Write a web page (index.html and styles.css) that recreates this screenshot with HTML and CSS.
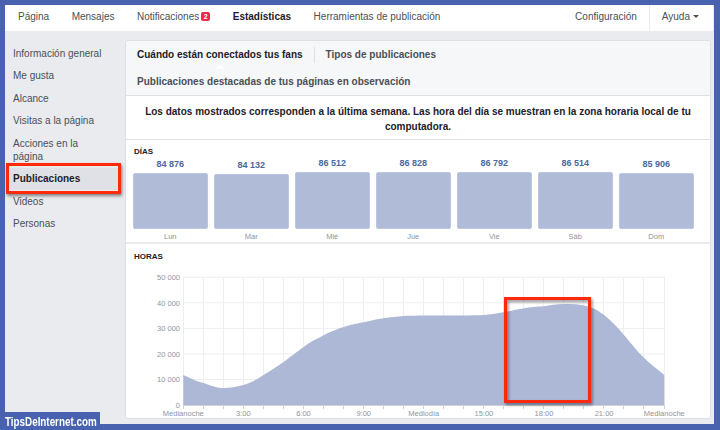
FILE: index.html
```html
<!DOCTYPE html>
<html lang="es">
<head>
<meta charset="utf-8">
<title>Estadísticas - Publicaciones</title>
<link rel="stylesheet" href="styles.css">
</head>
<body>
<div class="frame">
  <nav class="topnav">
    <span class="nav-item">Página</span>
    <span class="nav-item">Mensajes</span>
    <span class="nav-item">Notificaciones<span class="badge">2</span></span>
    <span class="nav-item nav-active">Estadísticas</span>
    <span class="nav-item">Herramientas de publicación</span>
    <div class="nav-right">
      <span class="nav-item">Configuración</span>
      <span class="nav-sep"></span>
      <span class="nav-item">Ayuda<span class="caret"></span></span>
    </div>
  </nav>
  <div class="layout">
    <aside class="sidebar">
      <div class="side-item">Información general</div>
      <div class="side-item">Me gusta</div>
      <div class="side-item">Alcance</div>
      <div class="side-item">Visitas a la página</div>
      <div class="side-item">Acciones en la página</div>
      <div class="side-item side-active">Publicaciones</div>
      <div class="side-item">Videos</div>
      <div class="side-item">Personas</div>
      <div class="highlight-box"></div>
    </aside>
    <main class="panel">
      <div class="tabs">
        <div class="tab-row">
          <span class="tab tab-current">Cuándo están conectados tus fans</span>
          <span class="tab-sep"></span>
          <span class="tab">Tipos de publicaciones</span>
        </div>
        <div class="tab-row">
          <span class="tab">Publicaciones destacadas de tus páginas en observación</span>
        </div>
      </div>
      <p class="desc">Los datos mostrados corresponden a la última semana. Las hora del día se muestran en la zona horaria local de tu computadora.</p>
      <section class="dias">
        <h3 class="sec-title">DÍAS</h3>
        <div class="bars">
          <div class="col"><span class="num">84 876</span><div class="bar" style="height:55.9px"></div><span class="day">Lun</span></div>
          <div class="col"><span class="num">84 132</span><div class="bar" style="height:55.1px"></div><span class="day">Mar</span></div>
          <div class="col"><span class="num">86 512</span><div class="bar" style="height:57px"></div><span class="day">Mié</span></div>
          <div class="col"><span class="num">86 828</span><div class="bar" style="height:57.2px"></div><span class="day">Jue</span></div>
          <div class="col"><span class="num">86 792</span><div class="bar" style="height:57.2px"></div><span class="day">Vie</span></div>
          <div class="col"><span class="num">86 514</span><div class="bar" style="height:57px"></div><span class="day">Sáb</span></div>
          <div class="col"><span class="num">85 906</span><div class="bar" style="height:56.4px"></div><span class="day">Dom</span></div>
        </div>
      </section>
      <section class="horas">
        <h3 class="sec-title">HORAS</h3>
        <svg class="chart" width="585" height="155" viewBox="0 0 585 155">
          <defs>
            <filter id="sh" x="-20%" y="-20%" width="140%" height="140%">
              <feDropShadow dx="1.5" dy="2" stdDeviation="1.5" flood-color="#000" flood-opacity="0.45"/>
            </filter>
          </defs>
          <g class="grid" stroke="#eceef2" stroke-width="1">
            <line x1="57.5" y1="14.3" x2="538.5" y2="14.3"/>
            <line x1="57.5" y1="39.8" x2="538.5" y2="39.8"/>
            <line x1="57.5" y1="65.4" x2="538.5" y2="65.4"/>
            <line x1="57.5" y1="90.9" x2="538.5" y2="90.9"/>
            <line x1="57.5" y1="116.5" x2="538.5" y2="116.5"/>
            <path d="M57.5 14V142M77.5 14V142M97.5 14V142M117.5 14V142M137.5 14V142M157.5 14V142M177.5 14V142M197.5 14V142M217.5 14V142M237.5 14V142M257.5 14V142M277.5 14V142M297.5 14V142M317.5 14V142M337.5 14V142M357.5 14V142M377.5 14V142M397.5 14V142M417.5 14V142M437.5 14V142M457.5 14V142M477.5 14V142M497.5 14V142M517.5 14V142M538.5 14V142"/>
          </g>
          <path class="area" d="M57.3 112.1 C64 115 70 118.5 77.3 120 C84 122 90 125 97.4 125.1 C104 125 110 124 117.4 122.1 C124 120 131 116.5 137.5 112.1 C144 108 151 104 157.5 99.1 C164 94 171 89 177.5 84 C184 79 191 76 197.6 72.3 C204 69 211 66.5 217.6 64.1 C224 62 231 60.5 237.7 59.3 C244 58 251 56 257.7 55.2 C264 54.4 271 53.5 277.7 53.1 C284 52.8 291 52.6 297.8 52.6 L337.9 52.6 C344 52.5 351 52.4 357.9 52.1 C364 51.5 371 50.5 377.9 49.3 C384 48 391 46.4 398 45.2 C404 44.2 411 43.6 418 43.2 C424 42.6 431 41.2 438.1 41.1 C445 41 452 41.5 458.1 42.4 C466 44 472 47 478.1 52.1 C486 58.5 492 65 498.2 72.3 C505 80 511 88.5 518.2 95 C525 101.5 532 106.5 538.3 112.1 L538.3 142 L57.3 142 Z"/>
          <line x1="57" y1="142.5" x2="539" y2="142.5" stroke="#ccd0d9" stroke-width="1"/>
          <path d="M57.5 142V146M77.5 142V146M97.5 142V146M117.5 142V146M137.5 142V146M157.5 142V146M177.5 142V146M197.5 142V146M217.5 142V146M237.5 142V146M257.5 142V146M277.5 142V146M297.5 142V146M317.5 142V146M337.5 142V146M357.5 142V146M377.5 142V146M397.5 142V146M417.5 142V146M437.5 142V146M457.5 142V146M477.5 142V146M497.5 142V146M517.5 142V146M538.5 142V146" stroke="#ccd0d9" stroke-width="1"/>
          <g class="ylab" text-anchor="end">
            <text x="54" y="17">50 000</text>
            <text x="54" y="42.5">40 000</text>
            <text x="54" y="68">30 000</text>
            <text x="54" y="93.5">20 000</text>
            <text x="54" y="119">10 000</text>
            <text x="54" y="144.5">0</text>
          </g>
          <g class="xlab" text-anchor="middle">
            <text x="57.3" y="153">Medianoche</text>
            <text x="117.4" y="153">3:00</text>
            <text x="177.5" y="153">6:00</text>
            <text x="237.7" y="153">9:00</text>
            <text x="297.8" y="153">Mediodía</text>
            <text x="357.9" y="153">15:00</text>
            <text x="418" y="153">18:00</text>
            <text x="478.1" y="153">21:00</text>
            <text x="538.3" y="153">Medianoche</text>
          </g>
          <rect x="379.5" y="35.5" width="84" height="103" fill="none" stroke="#ff2a0a" stroke-width="3" filter="url(#sh)"/>
        </svg>
      </section>
    </main>
  </div>
</div>
<div class="watermark"><span class="wm-text">TipsDeInternet.com</span></div>
</body>
</html>
```
FILE: styles.css
```css
* { box-sizing: border-box; }

html, body {
  margin: 0;
  padding: 0;
}

body {
  width: 720px;
  height: 430px;
  overflow: hidden;
  background: #4862b0;
  font-family: "Liberation Sans", Arial, sans-serif;
  position: relative;
}

.frame {
  margin: 5px 6px 0 5px;
  height: 419px;
  background: #e9ebee;
}

/* top navigation */
.topnav {
  height: 26px;
  margin-right: 1px;
  background: #fff;
  display: flex;
  align-items: center;
  padding: 0 14px 4px 13px;
  gap: 22.5px;
  font-size: 10px;
  color: #4b4f56;
}

.nav-item {
  display: inline-flex;
  align-items: center;
  white-space: nowrap;
}

.nav-active {
  font-weight: bold;
  color: #1d2129;
}

.badge {
  display: inline-block;
  width: 9px;
  height: 9px;
  margin-left: 2px;
  background: #f02849;
  border-radius: 2px;
  color: #fff;
  font-size: 7px;
  font-weight: bold;
  line-height: 9px;
  text-align: center;
}

.nav-right {
  margin-left: auto;
  display: flex;
  align-items: center;
  gap: 12px;
}

.nav-sep {
  width: 1px;
  height: 26px;
  margin-bottom: -4px;
  background: #e9ebee;
}

.caret {
  display: inline-block;
  margin-left: 3px;
  margin-top: 1px;
  border-left: 3px solid transparent;
  border-right: 3px solid transparent;
  border-top: 3px solid #4b4f56;
}

/* layout */
.layout {
  display: flex;
  align-items: flex-start;
}

.sidebar {
  position: relative;
  width: 120px;
  flex: none;
  padding-top: 11px;
}

.side-item {
  padding: 4.75px 20px 4.75px 8px;
  font-size: 10px;
  line-height: 13px;
  color: #4b4f56;
}

.side-active {
  font-weight: bold;
  color: #1d2129;
  background: #dfe1e6;
  margin-right: 4px;
}

.highlight-box {
  position: absolute;
  left: 1px;
  top: 132px;
  width: 115px;
  height: 31px;
  border: 3px solid #ff2a0a;
  box-shadow: 1px 2px 3px rgba(0, 0, 0, 0.45);
}

/* panel */
.panel {
  flex: 1;
  margin: 9px 3px 0 0;
  height: 379px;
  background: #fff;
  border: 1px solid #dddfe2;
  border-radius: 3px;
  overflow: hidden;
}

.tabs {
  height: 55px;
  background: #f6f7f9;
  border-bottom: 1px solid #dddfe2;
}

.tab-row {
  height: 27px;
  display: flex;
  align-items: center;
  padding-left: 11px;
}

.tab {
  font-size: 10px;
  font-weight: bold;
  color: #4b4f56;
  white-space: nowrap;
}

.tab-current {
  color: #1d2129;
  position: relative;
}

.tab-current::after {
  content: "";
  position: absolute;
  left: 50%;
  bottom: -9px;
  margin-left: -5px;
  border-left: 5px solid transparent;
  border-right: 5px solid transparent;
  border-bottom: 4px solid #fff;
}

.tab-sep {
  width: 1px;
  height: 16px;
  margin: 0 11px;
  background: #dddfe2;
}

.desc {
  margin: 0;
  height: 44px;
  padding: 8px 16px 0;
  border-bottom: 1px solid #dddfe2;
  font-size: 10px;
  font-weight: bold;
  line-height: 15px;
  text-align: center;
  color: #1d2129;
}

.sec-title {
  margin: 0;
  font-size: 8px;
  font-weight: bold;
  line-height: 10px;
  color: #1d2129;
}

.dias {
  height: 104px;
  padding: 7px 0 0 7px;
  border-bottom: 2px solid #e9ebee;
}

.dias .sec-title {
  padding-left: 1px;
}

.bars {
  display: grid;
  grid-template-columns: repeat(7, 74.5px);
  column-gap: 6.5px;
  height: 85px;
  align-items: end;
}

.col {
  display: flex;
  flex-direction: column;
  align-items: stretch;
  text-align: center;
}

.num {
  font-size: 9px;
  font-weight: bold;
  line-height: 10px;
  color: #4b67a1;
  margin-bottom: 4px;
}

.bar {
  background: #b0bbd7;
  border: 1px solid #bcc6de;
  border-radius: 2px;
}

.day {
  padding-top: 3px;
  font-size: 7.5px;
  line-height: 10px;
  color: #90949c;
  height: 13px;
}

.horas {
  padding-top: 7px;
}

.horas .sec-title {
  line-height: 12px;
  padding-left: 8px;
}

.chart {
  display: block;
}

.area {
  fill: #adb8d6;
}

.ylab text,
.xlab text {
  font-family: "Liberation Sans", Arial, sans-serif;
  font-size: 7.5px;
  fill: #90949c;
}

.watermark {
  position: absolute;
  left: 0;
  top: 412px;
  width: 100px;
  height: 18px;
  padding-left: 5px;
  background: #4862b0;
  overflow: hidden;
}

.wm-text {
  display: inline-block;
  color: #fff;
  font-family: "Liberation Sans", Arial, sans-serif;
  font-size: 12px;
  font-weight: bold;
  line-height: 17px;
  white-space: nowrap;
  transform: scaleX(0.82);
  transform-origin: left center;
}
```
